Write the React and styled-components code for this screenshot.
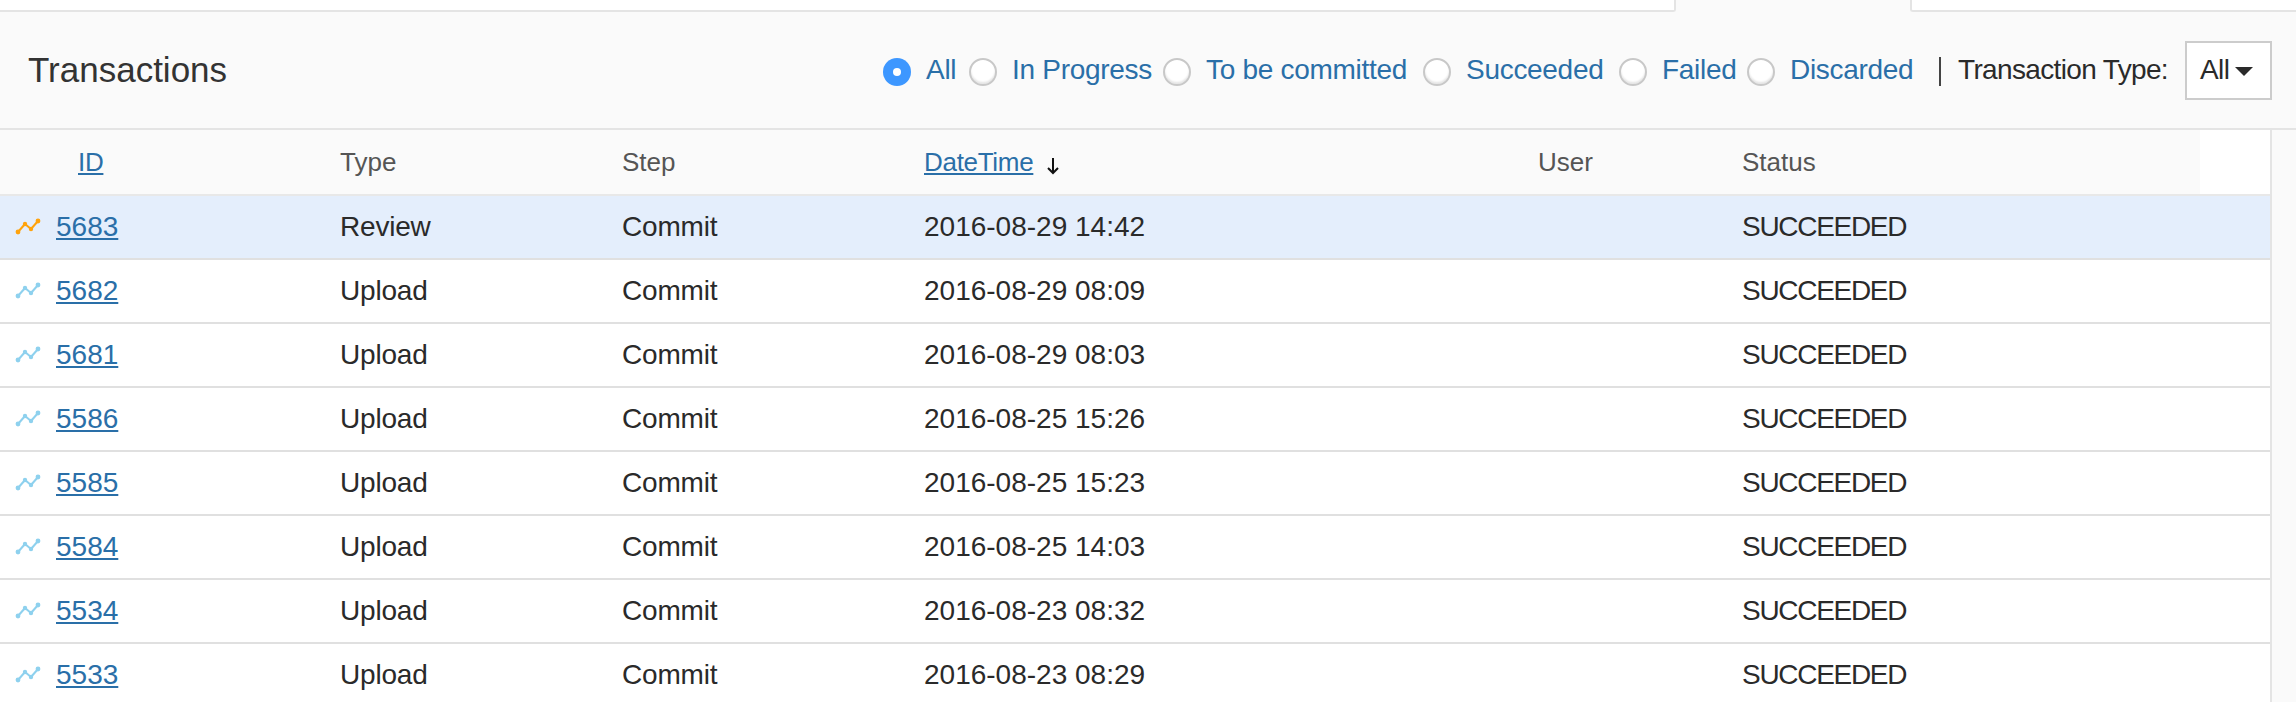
import React from "react";
import styled, { createGlobalStyle } from "styled-components";

const GlobalStyle = createGlobalStyle`
    html, body {
        margin: 0;
        padding: 0;
        background: #fafafa;
        font-family: "Liberation Sans", Arial, sans-serif;
        color: #2a2a2a;
    }
`;

const Page = styled.div`
    width: 2296px;
    height: 702px;
    overflow: hidden;
`;

const TabStrip = styled.div`
    display: flex;
    height: 12px;
`;

const TabLeft = styled.div`
    flex: 0 0 1676px;
    box-sizing: border-box;
    background: #fff;
    border-bottom: 2px solid #e4e4e4;
    border-right: 2px solid #e4e4e4;
    border-bottom-right-radius: 3px;
`;

const TabRight = styled.div`
    flex: 1;
    box-sizing: border-box;
    background: #fff;
    border-bottom: 2px solid #e4e4e4;
    border-left: 2px solid #e4e4e4;
    border-bottom-left-radius: 3px;
`;

const ActiveTab = styled.div`
    flex: 0 0 234px;
    background: #fafafa;
`;

const PanelHeader = styled.div`
    display: flex;
    align-items: center;
    justify-content: space-between;
    box-sizing: border-box;
    height: 118px;
    padding: 0 24px 0 28px;
    background: #fafafa;
    border-bottom: 2px solid #e4e4e4;
`;

const Title = styled.h2`
    margin: 0;
    font-size: 35px;
    font-weight: 400;
    color: #333;
`;

const Filters = styled.div`
    display: flex;
    align-items: center;
    font-size: 28px;
`;

const RadioItem = styled.label`
    display: flex;
    align-items: center;
    gap: 15px;
    width: ${(p) => p.$width}px;
    color: #2a6fa8;
    letter-spacing: -0.3px;
    white-space: nowrap;
`;

const Radio = styled.span`
    position: relative;
    flex: none;
    width: 28px;
    height: 28px;
    margin-top: 4px;
    box-sizing: border-box;
    border-radius: 50%;
    background: ${(p) => (p.$on ? "#3d97ff" : "#fff")};
    border: ${(p) => (p.$on ? "none" : "2px solid #c8c8c8")};
    box-shadow: ${(p) => (p.$on ? "none" : "inset 0 -2px 2px #e6e6e6")};

    &::after {
        content: "";
        display: ${(p) => (p.$on ? "block" : "none")};
        position: absolute;
        top: 10px;
        left: 10px;
        width: 8px;
        height: 8px;
        border-radius: 50%;
        background: #fff;
    }
`;

const Separator = styled.span`
    width: 2px;
    height: 29px;
    margin: 3px 17px 0 0;
    background: #444;
`;

const TypeLabel = styled.span`
    margin-right: 17px;
    color: #2a2a2a;
    letter-spacing: -0.65px;
    white-space: nowrap;
`;

const TypeSelect = styled.div`
    display: flex;
    align-items: center;
    gap: 6px;
    box-sizing: border-box;
    width: 87px;
    height: 59px;
    padding-left: 13px;
    background: #fff;
    border: 2px solid #ccc;
    letter-spacing: -0.6px;
`;

const Caret = styled.span`
    width: 0;
    height: 0;
    margin-top: 2px;
    border-left: 9px solid transparent;
    border-right: 9px solid transparent;
    border-top: 9px solid #2a2a2a;
`;

const TableArea = styled.div`
    box-sizing: border-box;
    width: 2272px;
    height: 572px;
    background: #fff;
    border-right: 2px solid #e4e4e4;
`;

const columns = "340px 282px 302px 614px 204px 1fr";

const HeadWrap = styled.div`
    border-bottom: 2px solid #e8e8e8;
`;

const HeadRow = styled.div`
    display: grid;
    grid-template-columns: ${columns};
    align-items: center;
    width: 2200px;
    height: 64px;
    background: #fafafa;
    font-size: 26px;
    color: #555;
`;

const HeadIdCell = styled.div`
    padding-left: 78px;
`;

const HeadLink = styled.a`
    color: #2a6fa8;
    text-decoration: underline;
    letter-spacing: -0.3px;
`;

const SortArrow = styled.svg`
    margin-left: 13px;
    vertical-align: -5px;
`;

const Row = styled.div`
    display: grid;
    grid-template-columns: ${columns};
    align-items: center;
    box-sizing: border-box;
    height: 64px;
    font-size: 28px;
    letter-spacing: -0.2px;
    background: ${(p) => (p.$selected ? "#e4eefc" : "#fff")};
    border-bottom: 2px solid #e0e0e0;
`;

const IdCell = styled.div`
    display: flex;
    align-items: center;
    gap: 15px;
    padding-left: 15px;
`;

const IdLink = styled.a`
    color: #2a6fa8;
    text-decoration: underline;
    letter-spacing: 0;
`;

const DateCell = styled.div`
    letter-spacing: 0;
`;

const StatusCell = styled.div`
    letter-spacing: -1.3px;
`;

const rows = [
    ["5683", "Review", "2016-08-29 14:42"],
    ["5682", "Upload", "2016-08-29 08:09"],
    ["5681", "Upload", "2016-08-29 08:03"],
    ["5586", "Upload", "2016-08-25 15:26"],
    ["5585", "Upload", "2016-08-25 15:23"],
    ["5584", "Upload", "2016-08-25 14:03"],
    ["5534", "Upload", "2016-08-23 08:32"],
    ["5533", "Upload", "2016-08-23 08:29"],
];

const filters = [
    { label: "All", width: 86 },
    { label: "In Progress", width: 194 },
    { label: "To be committed", width: 260 },
    { label: "Succeeded", width: 196 },
    { label: "Failed", width: 128 },
    { label: "Discarded", width: 192 },
];

function TrendIcon({ color }) {
    return (
        <svg width="26" height="18" viewBox="0 0 26 18" fill="none">
            <polyline points="3,14 10,6 16,11 23,3" stroke={color} strokeWidth="2" strokeLinejoin="round" />
            <circle cx="3" cy="14" r="2.4" fill={color} />
            <circle cx="10" cy="6" r="2.2" fill={color} />
            <circle cx="16" cy="11" r="2.2" fill={color} />
            <circle cx="23" cy="3" r="2.4" fill={color} />
        </svg>
    );
}

export default function App() {
    return (
        <Page>
            <GlobalStyle />
            <TabStrip>
                <TabLeft />
                <ActiveTab />
                <TabRight />
            </TabStrip>
            <PanelHeader>
                <Title>Transactions</Title>
                <Filters>
                    {filters.map((f, i) => (
                        <RadioItem key={f.label} $width={f.width}>
                            <Radio $on={i === 0} />
                            {f.label}
                        </RadioItem>
                    ))}
                    <Separator />
                    <TypeLabel>Transaction Type:</TypeLabel>
                    <TypeSelect>
                        All
                        <Caret />
                    </TypeSelect>
                </Filters>
            </PanelHeader>
            <TableArea>
                <HeadWrap>
                    <HeadRow>
                        <HeadIdCell><HeadLink>ID</HeadLink></HeadIdCell>
                        <div>Type</div>
                        <div>Step</div>
                        <div>
                            <HeadLink>DateTime</HeadLink>
                            <SortArrow width="14" height="20" viewBox="0 0 14 20" fill="none" stroke="#111" strokeWidth="2">
                                <path d="M7 2v15M2 12l5 5 5-5" />
                            </SortArrow>
                        </div>
                        <div>User</div>
                        <div>Status</div>
                    </HeadRow>
                </HeadWrap>
                {rows.map(([id, type, date], i) => (
                    <Row key={id} $selected={i === 0}>
                        <IdCell>
                            <TrendIcon color={i === 0 ? "#ffa30d" : "#8ed1ee"} />
                            <IdLink>{id}</IdLink>
                        </IdCell>
                        <div>{type}</div>
                        <div>Commit</div>
                        <DateCell>{date}</DateCell>
                        <div></div>
                        <StatusCell>SUCCEEDED</StatusCell>
                    </Row>
                ))}
            </TableArea>
        </Page>
    );
}
